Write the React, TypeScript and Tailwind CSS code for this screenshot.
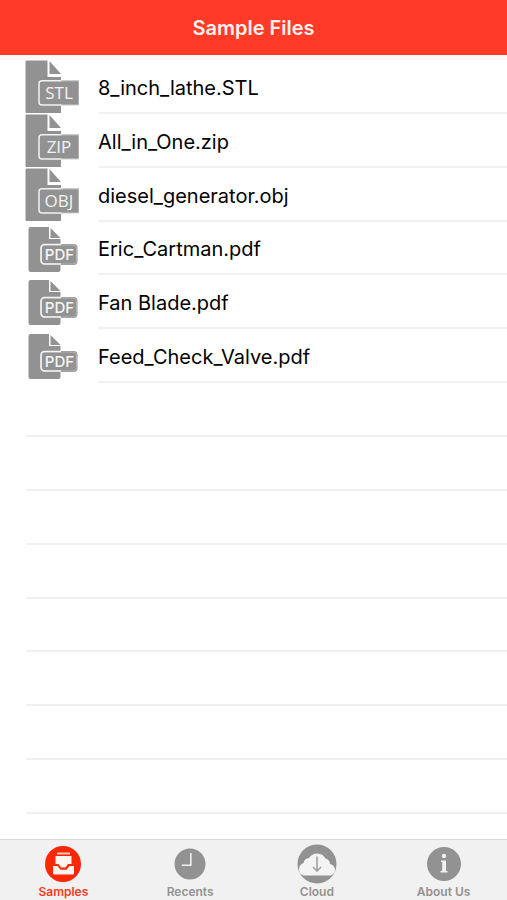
import { useState } from "react";
import type { ReactNode } from "react";

type FileItem = {
  name: string;
  kind: "STL" | "ZIP" | "OBJ" | "PDF";
};

const files: FileItem[] = [
  { name: "8_inch_lathe.STL", kind: "STL" },
  { name: "All_in_One.zip", kind: "ZIP" },
  { name: "diesel_generator.obj", kind: "OBJ" },
  { name: "Eric_Cartman.pdf", kind: "PDF" },
  { name: "Fan Blade.pdf", kind: "PDF" },
  { name: "Feed_Check_Valve.pdf", kind: "PDF" },
];

const emptyRows = [1, 2, 3, 4, 5, 6, 7, 8];

function FileIcon({ kind }: { kind: FileItem["kind"] }) {
  if (kind === "PDF") {
    return (
      <svg viewBox="0 0 54 54" className="size-[54px] shrink-0" aria-hidden="true">
        <path d="M5.5 5H24V17H35.5V48a2 2 0 0 1-2 2H5.5a2 2 0 0 1-2-2V7a2 2 0 0 1 2-2Z" fill="#929292" />
        <path d="M25.5 6L35.5 16H25.5Z" fill="#929292" />
        <rect x="15.5" y="22" width="37" height="21" rx="4" fill="#929292" />
        <rect x="16.5" y="23" width="35" height="19" rx="3.5" fill="none" stroke="#b4b4b4" strokeWidth="1" />
        <path d="M36 22.5H19.5a3.500 3.500 0 0 0-3.500 3.500V38.500a3.500 3.500 0 0 0 3.500 3.500H36" fill="none" stroke="#f6f6f6" strokeWidth="1.600" />
        <text
          x="34.5"
          y="38"
          textAnchor="middle"
          fontSize="15"
          className="fill-[#f6f6f6] font-['Inter',sans-serif] font-medium"
        >
          PDF
        </text>
      </svg>
    );
  }

  return (
    <svg viewBox="0 0 54 54" className="size-[54px] shrink-0" aria-hidden="true">
      <path d="M1.5 .5H22.5V17H36V53H1.5a1 1 0 0 1-1-1V1.500a1 1 0 0 1 1-1Z" fill="#929292" />
      <path d="M24.5 1L36 14H24.5Z" fill="#929292" />
      <path d="M13.5 20.5H54V45H13.5Z" fill="#929292" />
      <path d="M36.5 20.800H17a3 3 0 0 0-3 3V42a3 3 0 0 0 3 3H36.5" fill="none" stroke="#f2f2f2" strokeWidth="1.500" />
      <path d="M36 20.800H52.500a1.500 1.500 0 0 1 1.500 1.500V43.500a1.500 1.500 0 0 1-1.500 1.500H36" fill="none" stroke="#cccccc" strokeWidth="1" />
      <text
        x="34"
        y="39"
        textAnchor="middle"
        fontSize="17"
        className="fill-[#f2f2f2] font-['Open_Sans',sans-serif] font-medium"
      >
        {kind}
      </text>
    </svg>
  );
}

function SamplesIcon() {
  return (
    <svg viewBox="0 0 40 40" className="size-10" aria-hidden="true">
      <circle cx="20" cy="20" r="18" fill="#fb2705" />
      <path d="M14 9.500H27" stroke="#ffc9bd" strokeWidth="2" />
      <path d="M12.500 12H28.500V20H25L22.500 23.500H18L15.500 20H12.500Z" fill="#fff4f0" />
      <path d="M10 22H14.500L17.500 25.800H23.500L26.500 22H31V29a1.500 1.500 0 0 1-1.500 1.500H11.500a1.500 1.500 0 0 1-1.500-1.500Z" fill="#fff4f0" />
    </svg>
  );
}

function RecentsIcon() {
  return (
    <svg viewBox="0 0 40 40" className="size-10" aria-hidden="true">
      <circle cx="20" cy="20" r="15.500" fill="#929292" />
      <path d="M20.800 9V21.300H11.800" fill="none" stroke="#f1f1f1" strokeWidth="1.600" />
    </svg>
  );
}

function CloudIcon() {
  return (
    <svg viewBox="0 0 40 40" className="size-10" aria-hidden="true">
      <circle cx="20" cy="20" r="19.500" fill="#929292" />
      <path
        d="M7 31.500A6 6 0 0 1 2 25.500A7 7 0 0 1 6.500 19A6 6 0 0 1 12 14A9.500 9.500 0 0 1 28.500 14.500A6 6 0 0 1 33 20A6.500 6.500 0 0 1 38 26A6 6 0 0 1 33.500 31.500Z"
        fill="#f4f4f4"
      />
      <path d="M20 12.500V27M16 23L20 27.200L24 23" fill="none" stroke="#a0a0a0" strokeWidth="1.600" />
    </svg>
  );
}

function AboutIcon() {
  return (
    <svg viewBox="0 0 40 40" className="size-10" aria-hidden="true">
      <circle cx="20" cy="20" r="17" fill="#929292" />
      <circle cx="20" cy="12" r="2.200" fill="#f1f1f1" />
      <path d="M17 16.500H22V27H23.500V28.500H16.500V27H18.200V18H17Z" fill="#f1f1f1" />
    </svg>
  );
}

type Tab = {
  label: string;
  icon: ReactNode;
};

const tabs: Tab[] = [
  { label: "Samples", icon: <SamplesIcon /> },
  { label: "Recents", icon: <RecentsIcon /> },
  { label: "Cloud", icon: <CloudIcon /> },
  { label: "About Us", icon: <AboutIcon /> },
];

export default function App() {
  const [active, setActive] = useState("Samples");

  return (
    <div className="flex min-h-screen flex-col bg-white font-['Inter',sans-serif]">
      <header className="flex h-[55px] items-center justify-center bg-[#ff3b28]">
        <h1 className="text-xl font-semibold text-[#fff1ee]">Sample Files</h1>
      </header>

      <main className="flex flex-1 flex-col border-t-5 border-[#f9f9f9] pb-[25px]">
        <ul className="grid flex-1 auto-rows-fr">
          {files.map((file) => (
            <li key={file.name} className="flex">
              <button type="button" className="flex flex-1 items-stretch gap-[19px] pl-[25px] text-left">
                <span className="flex h-0 items-start">
                  <FileIcon kind={file.kind} />
                </span>
                <span className="flex flex-1 items-center border-b-2 border-[#f2f2f2] pt-1 text-xl text-black">
                  {file.name}
                </span>
              </button>
            </li>
          ))}
          {emptyRows.map((row) => (
            <li key={row} className="ml-[26px] border-b-2 border-[#f0f0f0]" />
          ))}
        </ul>
      </main>

      {/* Tab bar */}
      <nav className="flex h-[61px] shrink-0 border-t border-[#dcdcdc] bg-[#f1f1f1]">
        {tabs.map((tab) => (
          <button
            key={tab.label}
            type="button"
            onClick={() => setActive(tab.label)}
            className={`flex flex-1 flex-col items-center pt-1 text-xs font-semibold ${
              active === tab.label ? "text-[#fb3a1c]" : "text-[#929292]"
            }`}
          >
            {tab.icon}
            {tab.label}
          </button>
        ))}
      </nav>
    </div>
  );
}
